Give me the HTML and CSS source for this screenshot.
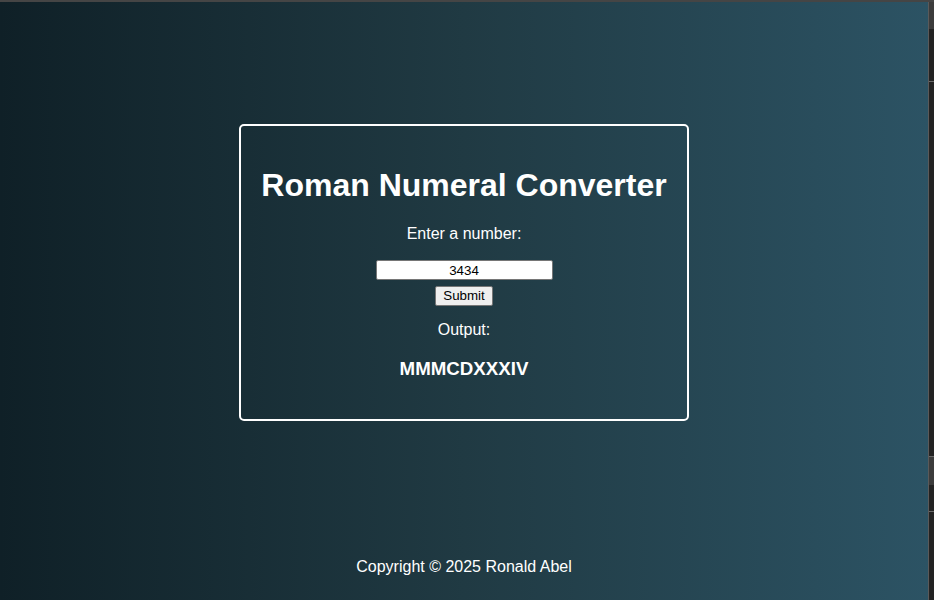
FILE: index.html
```html
<!DOCTYPE html>
<html lang="en">
<head>
<meta charset="utf-8">
<title>Roman Numeral Converter</title>
<link rel="stylesheet" href="styles.css">
</head>
<body>
<div class="frame">
  <div class="topbar"></div>
  <div class="window">
    <div class="page">
      <main class="main">
        <div class="card">
          <h1 class="title">Roman Numeral Converter</h1>
          <p class="label">Enter a number:</p>
          <input class="number-input" type="text" value="3434">
          <button class="submit-btn" type="button">Submit</button>
          <p class="label output-label">Output:</p>
          <h3 class="result">MMMCDXXXIV</h3>
        </div>
      </main>
      <footer class="footer">
        <p class="copyright">Copyright © 2025 Ronald Abel</p>
      </footer>
    </div>
    <div class="strip">
      <div class="strip-block strip-top"></div>
      <div class="strip-gap strip-gap-1"></div>
      <div class="strip-line"></div>
      <div class="strip-gap strip-gap-2"></div>
      <div class="strip-block strip-mid"></div>
      <div class="strip-gap strip-gap-3"></div>
      <div class="strip-line"></div>
      <div class="strip-fill"></div>
    </div>
  </div>
</div>
</body>
</html>
```

FILE: styles.css
```css
* { box-sizing: border-box; }

html, body {
  margin: 0;
  padding: 0;
  height: 100%;
}

body {
  font-family: "Liberation Sans", Arial, sans-serif;
  color: #ffffff;
  background: #232323;
}

.frame {
  display: flex;
  flex-direction: column;
  height: 100vh;
}

.topbar {
  height: 2px;
  background: #454545;
  flex-shrink: 0;
}

.window {
  flex: 1;
  display: flex;
  min-height: 0;
}

.page {
  flex: 1;
  display: flex;
  flex-direction: column;
  background: linear-gradient(to right, #0f2027, #203a43, #2c5364);
}

.main {
  flex: 1;
  display: flex;
  align-items: center;
  justify-content: center;
}

.card {
  border: 2px solid #ffffff;
  border-radius: 5px;
  padding: 20px;
  text-align: center;
}

.title {
  font-size: 32px;
  font-weight: bold;
  line-height: 37px;
  margin: 21px 0;
  white-space: nowrap;
}

.label {
  font-size: 16px;
  line-height: 18px;
  margin: 21px 0 17px;
}

.number-input {
  display: block;
  margin: 0 auto;
  width: 177px;
  height: 20px;
  border: 1px solid #767676;
  border-radius: 2px;
  padding: 1px 2px;
  background: #ffffff;
  color: #000000;
  font-family: "Liberation Sans", Arial, sans-serif;
  font-size: 13.33px;
  text-align: center;
}

.submit-btn {
  display: block;
  margin: 6px auto 0;
  height: 20px;
  padding: 1px 7px;
  border: 1px solid #767676;
  border-radius: 2px;
  background: #efefef;
  color: #000000;
  font-family: "Liberation Sans", Arial, sans-serif;
  font-size: 13.33px;
  line-height: 16px;
}

.output-label {
  margin: 15px 0 19px;
}

.result {
  font-size: 18.72px;
  font-weight: bold;
  line-height: 22px;
  margin: 0 0 19px;
}

.footer {
  height: 57px;
  flex-shrink: 0;
  padding-top: 15px;
  text-align: center;
}

.copyright {
  margin: 0;
  font-size: 16px;
}

.strip {
  width: 6px;
  flex-shrink: 0;
  display: flex;
  flex-direction: column;
  background: #232323;
  border-left: 1px solid #5a5a5a;
}

.strip-block {
  background: #3c3c3c;
}

.strip-top { height: 27px; }
.strip-gap-1 { height: 52px; }
.strip-line { height: 1px; background: #6a6a6a; }
.strip-gap-2 { height: 374px; }
.strip-mid { height: 29px; border-top: 1px solid #6a6a6a; }
.strip-gap-3 { height: 26px; }
.strip-fill { flex: 1; }
```
